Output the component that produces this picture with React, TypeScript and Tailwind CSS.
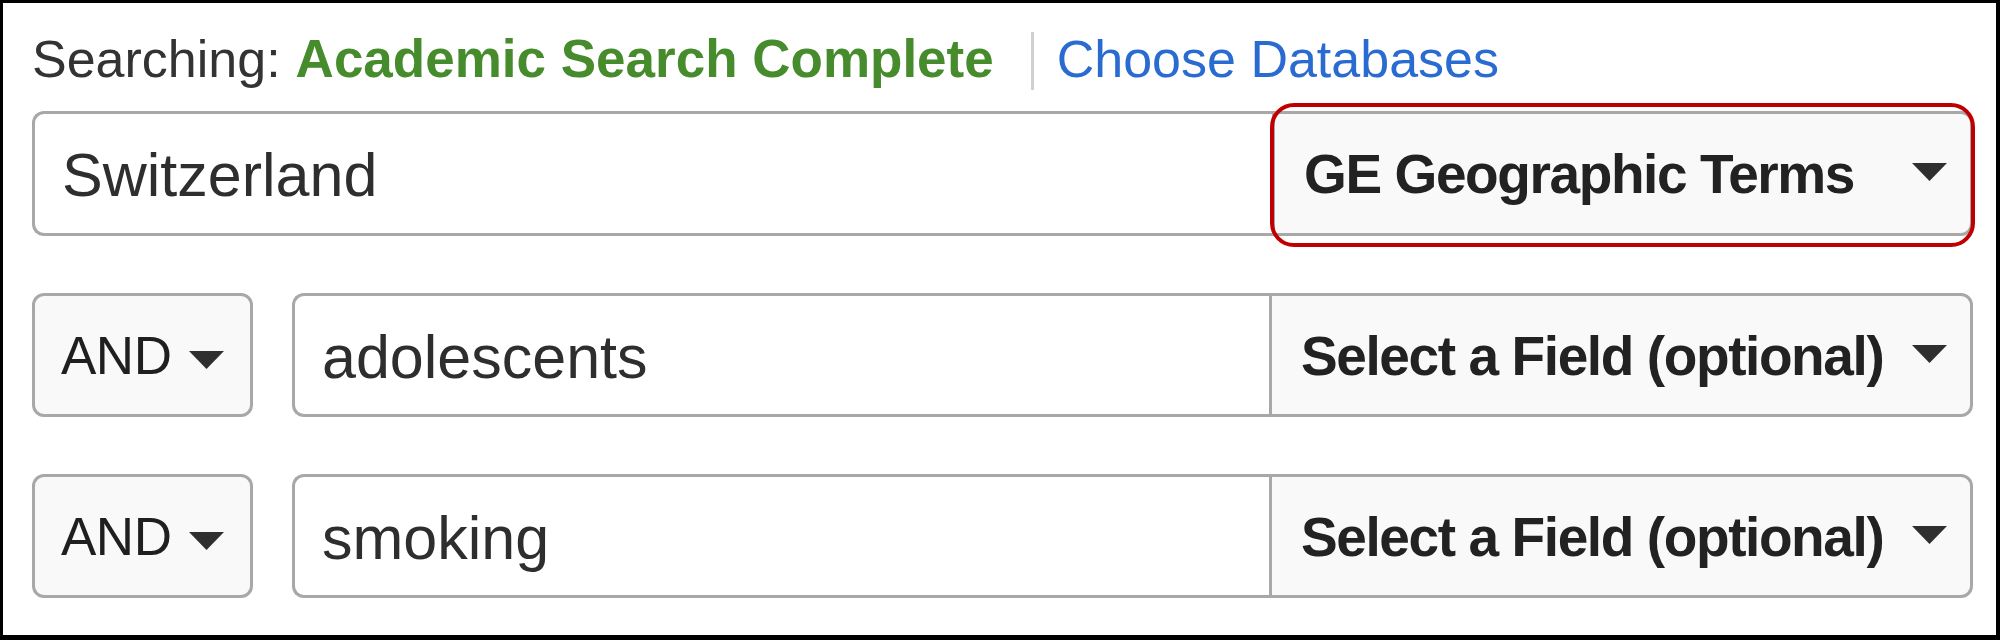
import React from "react";

const rows = [
  { op: "AND", term: "adolescents", field: "Select a Field (optional)" },
  { op: "AND", term: "smoking", field: "Select a Field (optional)" },
];

function Caret({ className = "" }: { className?: string }) {
  return (
    <svg width="35" height="18" viewBox="0 0 35 18" className={className}>
      <polygon points="0,0 35,0 17.5,18" fill="#2f2f2f" />
    </svg>
  );
}

function FieldSelect({ label, width }: { label: string; width: string }) {
  return (
    <div
      className={`flex h-full shrink-0 items-center justify-between rounded-r-[12px] border-[3px] border-[#a8a8a8] bg-[#f9f9f9] pl-[29px] pr-[23px] ${width}`}
    >
      <span className="pt-[2px] text-[55px] font-bold tracking-[-1.4px] text-[#222]">{label}</span>
      <Caret className="-mt-[3px]" />
    </div>
  );
}

function TermInput({ value }: { value: string }) {
  return (
    <div className="flex h-full min-w-0 flex-1 items-center rounded-l-[12px] border-y-[3px] border-l-[3px] border-[#a8a8a8] bg-white pl-[27px] pt-[5px]">
      <span className="text-[61px] text-[#2e2e2e]">{value}</span>
    </div>
  );
}

export default function App() {
  return (
    <div
      className="h-[640px] w-[2000px] border-t-[3px] border-l-[3px] border-r-4 border-b-[5px] border-black bg-white pl-[29px] pr-[23px]"
      style={{ fontFamily: '"Liberation Sans", Arial, sans-serif' }}
    >
      <div className="mt-[29px] flex items-start text-[52px]">
        <span className="mt-px leading-[52px] text-[#333]">Searching:</span>
        <span className="ml-[15px] mt-px text-[53px] font-bold leading-[52px] text-[#468b2c]">
          Academic Search Complete
        </span>
        <div className="ml-[37px] h-[58px] w-[3px] bg-[#d0d0d0]" />
        <span className="ml-[23px] mt-px leading-[52px] text-[#2a6bd1]">Choose Databases</span>
      </div>

      <div className="mt-[21px] flex h-[125px]">
        <TermInput value="Switzerland" />
        <div className="relative h-full">
          <FieldSelect label="GE Geographic Terms" width="w-[701px]" />
          <div className="pointer-events-none absolute -top-[8px] -right-[2px] -bottom-[11px] -left-[2px] rounded-[24px] border-4 border-[#c00000]" />
        </div>
      </div>

      {rows.map((row) => (
        <div key={row.term} className="mt-[57px] flex h-[124px]">
          <button
            type="button"
            className="flex h-full w-[221px] shrink-0 items-center rounded-[12px] border-[3px] border-[#a8a8a8] bg-[#f9f9f9] pl-[26px]"
          >
            <span className="pt-[2px] text-[53px] tracking-[-0.5px] text-[#1f1f1f]">{row.op}</span>
            <Caret className="ml-[18px] mt-[10px]" />
          </button>
          <div className="ml-[39px] flex h-full min-w-0 flex-1">
            <TermInput value={row.term} />
            <FieldSelect label={row.field} width="w-[704px]" />
          </div>
        </div>
      ))}
    </div>
  );
}
